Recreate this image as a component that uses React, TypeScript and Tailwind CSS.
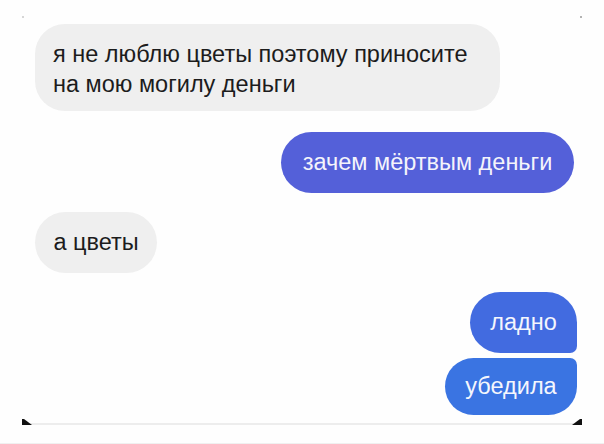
import React from "react";

export default function App() {
  const font = { fontFamily: '"Liberation Sans", Arial, sans-serif' };
  return (
    <div className="w-[604px] h-[444px] bg-[#fefefe] relative overflow-hidden" style={font}>
      {/* faint dots at top corners */}
      <div className="absolute left-[22px] top-[16px] w-[2px] h-[2px] bg-[#c8c8c8] rounded-full" />
      <div className="absolute left-[580px] top-[16px] w-[2px] h-[2px] bg-[#9a9a9a] rounded-full" />

      <div className="flex flex-col pt-[24px] pl-[35px] pr-[27px]">
        <div className="self-start w-[465px] h-[87px] bg-[#efefef] rounded-[30px] pl-[18px] pt-[15px] text-[23.5px] leading-[30px] text-[#1c1c1c]">
          я не люблю цветы поэтому приносите
          <br />
          на мою могилу деньги
        </div>

        <div className="self-end mr-[3px] mt-[21px] w-[293px] h-[61px] rounded-[31px] bg-[#5460d9] flex items-center justify-center text-[23.5px] text-[#f4f4fb]">
          зачем мёртвым деньги
        </div>

        <div className="self-start mt-[19px] w-[122px] h-[61px] rounded-[31px] bg-[#efefef] flex items-center justify-center text-[23.5px] text-[#1c1c1c]">
          а цветы
        </div>

        <div className="self-end mt-[19px] w-[107px] h-[61px] rounded-tl-[31px] rounded-tr-[31px] rounded-bl-[31px] rounded-br-[7px] bg-[#426be0] flex items-center justify-center text-[23.5px] text-[#f4f6fd]">
          ладно
        </div>

        <div className="self-end mt-[5px] w-[132px] h-[57px] rounded-tl-[29px] rounded-tr-[7px] rounded-bl-[29px] rounded-br-[29px] bg-[#3a74e2] flex items-center justify-center text-[23.5px] text-[#f4f6fd]">
          убедила
        </div>
      </div>

      {/* bottom frame line and corner marks */}
      <div className="absolute left-[23px] top-[423px] w-[558px] h-[2px] bg-[#ededed]" />
      <svg className="absolute left-[22px] top-[419px]" width="10" height="7" viewBox="0 0 10 7">
        <polygon points="0,0 2,0 10,6 0,6" fill="#111" />
      </svg>
      <svg className="absolute left-[572px] top-[419px]" width="10" height="7" viewBox="0 0 10 7">
        <polygon points="10,0 8,0 0,6 10,6" fill="#111" />
      </svg>
      <div className="absolute left-0 top-[443px] w-[604px] h-[1px] bg-[#f0f0f0]" />
    </div>
  );
}
